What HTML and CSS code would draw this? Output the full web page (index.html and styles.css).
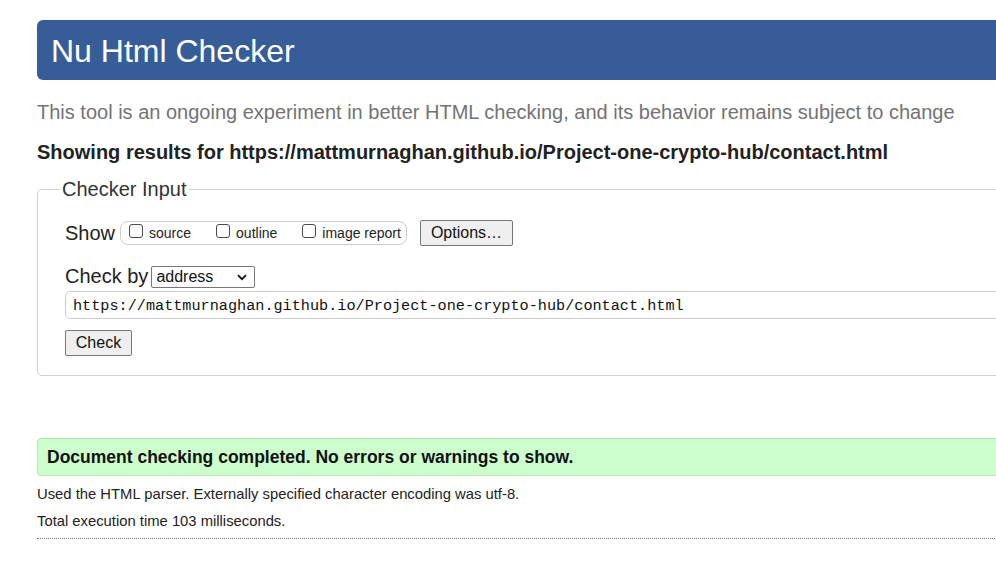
FILE: index.html
```html
<!DOCTYPE html>
<html lang="en">
<head>
<meta charset="utf-8">
<title>Nu Html Checker</title>
<link rel="stylesheet" href="styles.css">
</head>
<body>
<main class="page">
  <header class="banner">
    <h1 class="title">Nu Html Checker</h1>
  </header>
  <p class="intro">This tool is an ongoing experiment in better HTML checking, and its behavior remains subject to change</p>
  <p class="results-for">Showing results for https://mattmurnaghan.github.io/Project-one-crypto-hub/contact.html</p>

  <form class="checker-form">
    <fieldset class="checker">
      <legend class="checker-legend">Checker Input</legend>
      <div class="row show-row">
        <span class="row-label">Show</span>
        <span class="show-group">
          <label class="opt"><input type="checkbox" class="box"><span>source</span></label>
          <label class="opt"><input type="checkbox" class="box"><span>outline</span></label>
          <label class="opt"><input type="checkbox" class="box"><span>image report</span></label>
        </span>
        <button type="button" class="btn options-btn">Options…</button>
      </div>
      <div class="row checkby-row">
        <span class="row-label">Check by</span>
        <span class="select-wrap">
          <select class="select"><option>address</option></select>
          <svg class="chevron" width="10" height="7" viewBox="0 0 10 7"><path d="M1 1.2 L5 5.2 L9 1.2" fill="none" stroke="#111" stroke-width="1.8"/></svg>
        </span>
      </div>
      <input class="url" type="text" value="https://mattmurnaghan.github.io/Project-one-crypto-hub/contact.html">
      <div class="row submit-row">
        <button type="button" class="btn check-btn">Check</button>
      </div>
    </fieldset>
  </form>

  <p class="success">Document checking completed. No errors or warnings to show.</p>
  <p class="details">Used the HTML parser. Externally specified character encoding was utf-8.</p>
  <p class="details details-time">Total execution time 103 milliseconds.</p>
  <hr class="rule">
</main>
</body>
</html>
```
FILE: styles.css
```css
html, body {
  margin: 0;
  padding: 0;
  overflow: hidden;
  background: #fff;
}

body {
  font-family: "Liberation Sans", Arial, sans-serif;
  color: #222;
}

.page {
  width: 1120px;
  padding: 20px 0 0 37px;
}

.banner {
  height: 60px;
  background: #365d98;
  border-radius: 6px;
  display: flex;
  align-items: center;
}

.title {
  margin: 0;
  padding-left: 14px;
  font-size: 32px;
  font-weight: normal;
  color: #fff;
  line-height: 1;
  padding-top: 1px;
}

.intro {
  margin: 21px 0 0;
  font-size: 20px;
  line-height: 23px;
  color: #737373;
}

.results-for {
  margin: 17px 0 0;
  font-size: 20px;
  line-height: 23px;
  font-weight: bold;
  color: #222;
}

.checker-form {
  margin: 14px 0 0;
}

.checker {
  margin: 0;
  border: 1px solid #cfcfcf;
  border-radius: 5px;
  padding: 0 0 19px 27px;
  min-width: 0;
}

.checker-legend {
  margin-left: -5px;
  padding: 0 2px;
  font-size: 20px;
  line-height: 23px;
  color: #333;
}

.row {
  display: flex;
  align-items: center;
}

.row-label {
  font-size: 20px;
  color: #222;
}

.show-row {
  margin-top: 18px;
  height: 28px;
}

.show-group {
  display: inline-flex;
  align-items: center;
  margin-left: 5px;
  height: 22px;
  padding: 0 5px 0 8px;
  border: 1px solid #cccccc;
  border-radius: 8px;
}

.opt {
  display: inline-flex;
  align-items: center;
  font-size: 14px;
  color: #222;
  margin-right: 25px;
}

.opt:last-child {
  margin-right: 0;
}

.box {
  appearance: none;
  -webkit-appearance: none;
  width: 14px;
  height: 14px;
  margin: -5px 6px 0 0;
  border: 1px solid #4a4a4a;
  border-radius: 3px;
  background: #fff;
  box-sizing: border-box;
}

.btn {
  font-family: "Liberation Sans", Arial, sans-serif;
  font-size: 16px;
  color: #111;
  background: #efefef;
  border: 1px solid #767676;
  border-radius: 2px;
  padding: 0 10px;
  height: 26px;
}

.options-btn {
  margin-left: 13px;
  width: 93px;
}

.checkby-row {
  margin-top: 18px;
  height: 23px;
}

.select-wrap {
  position: relative;
  display: inline-block;
  margin-left: 3px;
}

.select {
  appearance: none;
  -webkit-appearance: none;
  width: 104px;
  height: 22px;
  border: 1px solid #767676;
  border-radius: 2px;
  background: #fff;
  font-family: "Liberation Sans", Arial, sans-serif;
  font-size: 16px;
  color: #111;
  padding: 0 0 0 4px;
  margin: 0;
  display: block;
}

.chevron {
  position: absolute;
  right: 8px;
  top: 8px;
}

.url {
  display: block;
  margin-top: 3px;
  width: 1000px;
  height: 28px;
  box-sizing: border-box;
  border: 1px solid #cccccc;
  border-radius: 5px;
  padding: 1px 0 0 7px;
  font-family: "Liberation Mono", "DejaVu Sans Mono", monospace;
  font-size: 15.2px;
  color: #111;
  background: #fff;
}

.submit-row {
  margin-top: 11px;
}

.check-btn {
  width: 67px;
  padding: 0;
}

.success {
  margin: 62px 0 0;
  height: 36px;
  line-height: 36px;
  background: #ccffcc;
  border: 1px solid #b9e4b9;
  border-radius: 4px;
  padding-left: 9px;
  font-size: 17.5px;
  font-weight: bold;
  color: #111;
}

.details {
  margin: 10px 0 0;
  font-size: 14.8px;
  line-height: 16px;
  color: #222;
}

.details-time {
  margin-top: 11px;
}

.rule {
  margin: 9px 0 0;
  border: 0;
  border-top: 1px dotted #777;
  height: 0;
}
```
